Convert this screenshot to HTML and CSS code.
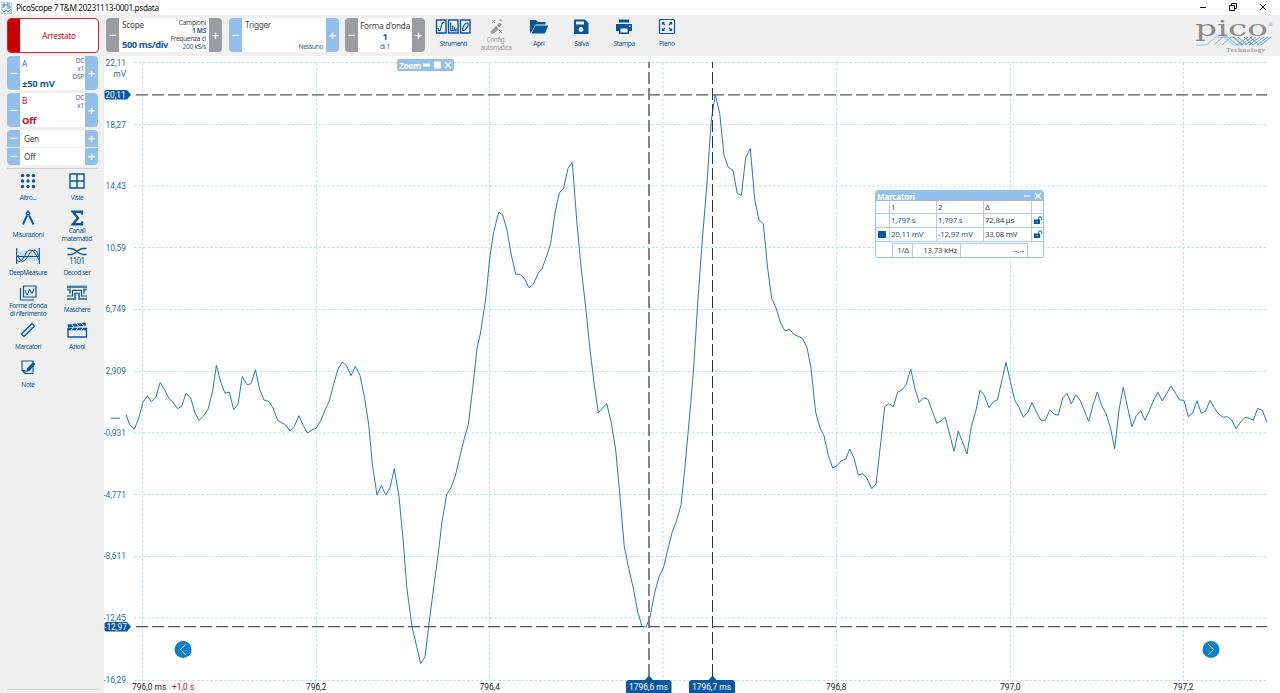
FILE: index.html
```
<!DOCTYPE html>
<html lang="it">
<head>
  <meta charset="UTF-8">
  <title>PicoScope 7 T&amp;M 20231113-0001.psdata</title>
  <link rel="stylesheet" href="styles.css">
</head>
<body>

  <header class="titlebar">
    <svg class="app-icon" viewBox="0 0 11 12"><rect x=".5" y=".5" width="10" height="11" fill="#eaf4fa" stroke="#b4d2e4"/><path d="M2 6V2h2v2H2M9 2H6v2h3v2H6M1 8l2 2 2-2 2 2 3-3" fill="none" stroke="#3d8fc0"/></svg>
    <span>PicoScope 7 T&amp;M 20231113-0001.psdata</span>
    <div class="win-buttons">
      <svg viewBox="0 0 8 8"><path d="M1 4.500h6"/></svg>
      <svg viewBox="0 0 8 8"><path d="M.5 2.500h5v5h-5zM2.500 2.500v-2h5v5h-2"/></svg>
      <svg viewBox="0 0 8 8"><path d="M1 1l6 6M7 1L1 7"/></svg>
    </div>
  </header>

  <div class="toolbar">
    <div class="status"><i></i><span>Arrestato</span></div>

    <div class="control gray scope">
      <button>−</button>
      <div class="body">
        <span class="name">Scope</span>
        <b class="value">500 ms/div</b>
        <div class="info"><span>Campioni</span><b>1 MS</b><span>Frequenza ci</span><em>200 kS/s</em></div>
      </div>
      <button>+</button>
    </div>

    <div class="control trigger">
      <button>−</button>
      <div class="body"><span class="name">Trigger</span><em class="state">Nessuno</em></div>
      <button>+</button>
    </div>

    <div class="control gray wave">
      <button>−</button>
      <div class="body"><span class="name">Forma d'onda</span><b>1</b><em>di 1</em></div>
      <button>+</button>
    </div>

    <nav class="actions">
      <a class="action">
        <svg width="36" height="18" viewBox="0 0 36 18" fill="none" stroke="#075798" stroke-width="1.200"><path d="M1.500 2h9.500v13H1.500zM13.500 2h9.500v13h-9.500zM25.500 2H35v13h-9.500z" stroke-width="1.400"/><path d="M3 10c1 5 2.300 3 3.200-1.500S8.500 4 9.500 4.500M15.700 4.500v8.200h6M17.700 12V7.500M19.700 12v-3M21.300 12v-1.500"/><path d="M27.500 12.500c-.8-2.500 3-8 5-7.500s-.5 6.500-3.500 7.300z"/></svg>
        <span>Strumenti</span>
      </a>
      <a class="action off">
        <svg width="18" height="18" viewBox="0 0 18 18"><path d="M3 14l6-6 3 3-6 5zM10 7l2.500-2.500 2.500 2-2.500 3z" fill="#999"/><path d="M5 2l3 3M8 2L5 5M12.500 1l2 2M14.500 1l-2 2M12 12l3 3M15 12l-3 3" stroke="#999"/></svg>
        <span>Config.<br>automatica</span>
      </a>
      <a class="action">
        <svg width="20" height="18" viewBox="0 0 20 18"><path d="M1 15V2h6l2 2h7.500v2.500H6.500L3 13z" fill="#075798"/><path d="M6.300 7.500h12.900L16 15.500H2.500z" fill="#075798"/></svg>
        <span>Apri</span>
      </a>
      <a class="action">
        <svg width="16" height="18" viewBox="0 0 16 18"><path d="M1 1.500h11l3.500 3.500v11H1z" fill="#075798"/><path d="M3 3.500h8v3H3z" fill="#efefef"/><circle cx="8" cy="11.500" r="2.400" fill="#efefef"/></svg>
        <span>Salva</span>
      </a>
      <a class="action">
        <svg width="18" height="18" viewBox="0 0 18 18"><path d="M4 1.500h10v3H4zM1 6h16v7h-3v3H4v-3H1z" fill="#075798"/><path d="M5.500 10.500h7v4h-7z" fill="#efefef"/><path d="M14 7.500h1.500V9H14z" fill="#fff"/></svg>
        <span>Stampa</span>
      </a>
      <a class="action">
        <svg width="18" height="18" viewBox="0 0 18 18" fill="none" stroke="#075798"><rect x="1.500" y="1.500" width="15" height="14" rx="1" stroke-width="1.200"/><path stroke-width="1.200" d="M4.500 6.500v-2h2M4.500 4.500L7 7M11.500 4.500h2v2M13.500 4.500L11 7M4.500 10.500v2h2M4.500 12.500L7 10M11.500 12.500h2v-2M13.500 12.500L11 10"/></svg>
        <span>Pieno</span>
      </a>
    </nav>

    <svg class="logo" viewBox="0 0 80 38">
      <text class="logo-name" x="2" y="18" textLength="73" lengthAdjust="spacingAndGlyphs">pico</text>
      <text class="logo-reg" x="75" y="8">®</text>
      <g fill="none">
        <path d="M3 27h10l10-8h8l10 8h8" stroke="#a9d3f1" stroke-width="1.500"/>
        <path d="M21 27l9-8h5l9 8M29 27l9-8h3l9 8" stroke="#72b2e1"/>
        <path d="M44 27l11-8M48 27l11-8M52 27l11-8M56 27l11-8M60 27l11-8M64 27l11-8M68 27l10-8M40 19l9 8M45 19l9 8M51 19l9 8M57 19l9 8" stroke="#4d93c9" stroke-width=".8"/>
      </g>
      <text class="logo-sub" x="33" y="34" textLength="39">Technology</text>
    </svg>
  </div>

  <div class="main">
    <aside class="sidebar">
      <div class="control channel">
        <button>−</button>
        <div class="body"><span class="name">A</span><b class="value">±50 mV</b><div class="info">DC<br>x1<br>DSP</div></div>
        <button>+</button>
      </div>
      <div class="control channel red">
        <button>−</button>
        <div class="body"><span class="name">B</span><b class="value">Off</b><div class="info">DC<br>x1</div></div>
        <button>+</button>
      </div>
      <div class="generator">
        <div class="control"><button>−</button><span class="body">Gen</span><button>+</button></div>
        <div class="control"><button>−</button><span class="body">Off</span><button>+</button></div>
      </div>

      <div class="tools">
        <a class="tool">
          <svg viewBox="0 0 24 18" class="dots"><circle cx="6.500" cy="3.500" r="1.700"/><circle cx="12" cy="3.500" r="1.700"/><circle cx="17.500" cy="3.500" r="1.700"/><circle cx="6.500" cy="9" r="1.700"/><circle cx="12" cy="9" r="1.700"/><circle cx="17.500" cy="9" r="1.700"/><circle cx="6.500" cy="14.500" r="1.700"/><circle cx="12" cy="14.500" r="1.700"/><circle cx="17.500" cy="14.500" r="1.700"/></svg>
          <span>Altro...</span>
        </a>
        <a class="tool">
          <svg viewBox="0 0 24 18"><path d="M5 2h14v14H5zM12 2v14M5 9h14"/></svg>
          <span>Viste</span>
        </a>
        <a class="tool">
          <svg viewBox="0 0 24 18"><circle cx="12" cy="4.500" r="1.700" stroke-width="1.200"/><path d="M11 6.500L7 15.500M13 6.500l4.500 9" stroke-width="1.900"/><path d="M12 1v2" stroke-width="1.200"/></svg>
          <span>Misurazioni</span>
        </a>
        <a class="tool">
          <svg viewBox="0 0 24 18"><path d="M17 5.500V2.800H7.800L13 9l-5.200 6.200H17v-2.700" stroke-width="2.400"/></svg>
          <span>Canali<br>matematici</span>
        </a>
        <a class="tool">
          <svg viewBox="0 0 24 18"><path d="M2 4h20v10H2z" fill="#cddbe6" stroke="none"/><path d="M.7 1v16M23.300 1v16M1 9.500h22" stroke-width="1.200"/><path d="M1 14c3 1 5 0 7-4s3.500-7 6-7 5 2 9 10M2 8c2 7 5 8 8 4s5-9 8-9 3 3 4.500 6" stroke-width="1"/></svg>
          <span>DeepMeasure</span>
        </a>
        <a class="tool">
          <svg viewBox="0 0 24 18"><path d="M2.500 1.500h3.500c5 0 7 6 12 6h3.500M2.500 7.500h3.500c5 0 7-6 12-6h3.500" stroke-width="1.600"/><text x="4" y="16.500" textLength="16">1101</text></svg>
          <span>Decod ser</span>
        </a>
        <a class="tool">
          <svg viewBox="0 0 24 18"><path d="M7.500 2H20v11H7.500zM4.500 4v12H18" stroke-width="1.200"/><path d="M9 6c1 5 2.500 6 3.500 2s1.500-2.500 2.200-.5 2 3 3.300-3" stroke-width="1.100"/></svg>
          <span>Forme d'onda<br>di riferimento</span>
        </a>
        <a class="tool">
          <svg viewBox="0 0 24 18"><path d="M2 2.800h20" stroke-width="2.400" stroke="#4680ad"/><path d="M2 5.500h3v4M22 5.500h-3v4" stroke-width="2" stroke="#4680ad"/><path d="M2 12h5.500V6.300h9V12H22" stroke-width="1.200"/><path d="M2 15h8V9.500h4V15h8" stroke-width="2" stroke="#4680ad"/></svg>
          <span>Maschere</span>
        </a>
        <a class="tool">
          <svg viewBox="0 0 24 18"><path d="M5.500 13L16 2.500l2.500 2.500L8 15.500z" stroke-width="1.300"/><path d="M8 11.500l1 1M10 9.500l1 1M12 7.500l1 1M14 5.500l1 1" stroke-width=".8"/></svg>
          <span>Marcatori</span>
        </a>
        <a class="tool">
          <svg viewBox="0 0 24 18"><path d="M3 8h18.500v8H3z" stroke-width="1.300"/><path d="M2.500 3.500l18-2 .5 3-18 2z" fill="#075798" stroke="none"/><path d="M2.500 8h19.500" stroke-width="2.600"/><path d="M6 2.500l2.500 3M11 2l2.500 3M16 1.500l2.500 3M8 6.500l-2 3M13 6.500l-2 3M18 6.500l-2 3" stroke="#efefef" stroke-width="1"/></svg>
          <span>Azioni</span>
        </a>
        <a class="tool">
          <svg viewBox="0 0 24 18"><path d="M6 3h11v12.500H9L6 12.500zM6 12.500h3v3" stroke-width="1.100"/><path d="M10 14l1-3.500 6-6.500 2.500 2-6 7z" fill="#075798" stroke="none"/></svg>
          <span>Note</span>
        </a>
      </div>
    </aside>

    <section class="view">
      <!-- plot coordinates are window pixels, shifted by the viewBox -->
      <svg class="plot" viewBox="104 56 1176 637">
        <path class="grid" d="M134 62.500H1267M134 124.500H1267M134 186H1267M134 247.500H1267M134 309.500H1267M134 371.500H1267M134 432.800H1267M134 494.500H1267M134 556.500H1267M134 618H1267M134 680.500H1267"/>
        <path class="grid" d="M142.500 63V681M316.500 63V681M489.500 63V681M663 63V681M836.500 63V681M1010.500 63V681M1183.500 63V681"/>

        <polyline class="trace" points="126,414.300 129.700,424.700 134.300,429.300 138.700,418.300 143,402.300 147.300,395.700 151.300,401.700 155.700,397.700 160.200,382.500 164.300,389.300 168.700,398 172.700,402 177.700,408.700 181.700,406 186,393.300 190.700,398 195,413 199,420.300 203.300,416.300 208,409.300 212.500,391.700 216.400,365.300 220.700,382 225,393.300 229.300,392 233.700,409.700 238,404.300 242.300,376.300 247,384.700 251,383.700 255.400,369.700 259.700,389.300 264,400 268.700,401.300 273,408 277.700,420.300 285.700,425 290,431 294.300,426.300 299,415.700 303.300,425.700 307.600,433 312.300,429.700 316.300,428 320.700,420.700 325.300,409.300 329.300,401 333.700,384 338,369 342.300,362 346.700,366 351,375.700 355.300,366.300 360,375.300 364.700,398.700 368.700,424.700 372.300,464 377,495 381.300,485.700 385.700,494.700 390,488 394.300,468.700 399,496.700 403.300,541.700 406.700,586.700 412,626.700 416.700,646.700 420.700,663.700 425,656.700 429,623.300 434.300,582.700 438.300,553.300 442,521.700 446.700,494.300 451,487.700 455.300,476 459.700,457.300 464.300,438.300 468.300,424.700 472.700,388.300 477,348.300 480.500,333 486,296.700 489.700,258.300 493.700,231.700 498.700,212.300 502.700,215 507,230 511.300,255 515.700,274.300 520.300,274.300 524.700,279 529,287.700 533.300,284.300 538,273.700 542,268.700 546.300,257.300 550.700,243.300 555,212.700 559.300,193 563.700,188 568,168.300 572.300,162.300 576.700,220 581,266.700 586,310 589.700,346.700 593.700,380 598.300,412.700 606.700,403.300 611.300,422.700 615.700,450 620,496.700 624.300,546.700 628.700,568.300 633.300,588.300 637.700,611.700 642,626.300 646,627 650,617.300 654.700,592.700 659,576.700 663.300,568.300 667.700,550 672,532.700 676.700,520.300 681,505 685,466.700 690.700,403.300 693.600,369 697.700,303.300 702.300,240 706.700,186.700 711.300,120 715.300,94.700 719.700,113.300 724,155 728.300,167.300 733,170.300 737.300,193.700 741.300,195.300 745.700,157.700 750.300,148.300 754.700,199.300 759,220 763.300,223.700 767.700,268.300 771.700,298.300 776,308 780.700,323.300 785,331 789.300,329 793.700,334 798,336.300 802.300,338.300 807,347.300 811,368.300 815.700,412.300 819.700,427.300 824,435.700 828.300,455.300 832.700,468 837,465.700 841.300,460.700 845.700,459.300 849.700,449 854,458.300 858.300,475 863,473.700 867,478.300 871.700,488.700 876,484 880.300,446.700 884.700,406.700 889,403.700 893.300,406.700 897.700,392 902,390 906,384.700 910.700,369 915,389 919.300,402.300 923.700,397.700 928,399.300 936.700,423.300 941,421 945.300,417.300 954,451.300 958.300,431 967,454 971.300,426.700 975.700,411.700 980,390.300 984.300,395.300 989,407.700 993.300,401.700 997.300,400 1001.700,381.300 1006,362.300 1010.300,381.300 1014.700,400 1019,407.300 1023.300,417.300 1027.700,412.300 1032,402.700 1036.700,412.700 1041,420.300 1045.300,420.300 1049.700,410 1054,414 1058.300,415.300 1062.700,398 1067,393.300 1071.300,404 1075.700,394.700 1080,400 1088.700,421.300 1093,405 1097.300,392 1101.700,405.700 1106,413.700 1110.300,427.300 1114.700,448.700 1119,410 1123.300,387 1127.700,408.300 1132,426.700 1136.300,415.700 1140.700,410.700 1145,420.300 1149.300,410.700 1153.700,400 1158,392.300 1162.300,401 1171,386 1179.700,400 1184,400.300 1188.300,416.700 1192.700,413 1197,400.700 1201.300,413.300 1205.700,411 1210,400.300 1214.300,407.700 1218.700,414 1223.300,417.300 1227.300,416.700 1231.700,420 1236,428.700 1240.700,422 1245,417.300 1249.300,418.300 1253.300,420.300 1257.700,408.300 1262.300,410.300 1267,422.300"/>
        <path d="M110.500 418.200H120" class="trace"/>

        <path class="marker" d="M136 94.800H1267M136 626.600H1267"/>
        <path class="marker wide" d="M649 62V678" stroke-dashoffset="6"/>
        <path class="marker dark" d="M712.500 62V678" stroke-dashoffset="6"/>

        <g class="axis-y">
          <text x="126" y="65.500">22,11</text>
          <text x="126" y="77">mV</text>
          <text x="126" y="127.500">18,27</text>
          <text x="126" y="189">14,43</text>
          <text x="126" y="250.500">10,59</text>
          <text x="126" y="312.300">6,749</text>
          <text x="126" y="374">2,909</text>
          <text x="126" y="436">-0,931</text>
          <text x="126" y="497.500">-4,771</text>
          <text x="126" y="559.300">-8,611</text>
          <text x="126" y="620.800">-12,45</text>
          <text x="126" y="682.800">-16,29</text>
        </g>
        <g class="axis-x">
          <text x="132" y="690">796,0 ms</text>
          <text x="172" y="690" class="offset">+1,0 s</text>
          <text x="306" y="690">796,2</text>
          <text x="479.500" y="690">796,4</text>
          <text x="826" y="690">796,8</text>
          <text x="1000" y="690">797,0</text>
          <text x="1173" y="690">797,2</text>
        </g>

        <g class="flag">
          <path d="M106 90h21l4 4.800-4 4.800h-21l-1.500-1.500v-6.600z"/>
          <text x="115.500" y="98">20,11</text>
          <path d="M106 622h21l4 4.700-4 4.700h-21l-1.500-1.500v-6.400z"/>
          <text x="115.500" y="629.800">-12,97</text>
          <path d="M628 680h17l4-4.500 4 4.500h16.500l2 2v11H626v-11z"/>
          <text x="648.500" y="690">1796,6 ms</text>
          <path d="M691 680h17.500l4-4.500 4 4.500H733l2 2v11h-46v-11z"/>
          <text x="711.500" y="690">1796,7 ms</text>
        </g>

        <g class="pager">
          <circle cx="183" cy="649.500" r="8.500"/><path d="M185.500 644.500l-5 5 5 5"/>
          <circle cx="1211" cy="649.500" r="8.500"/><path d="M1208.500 644.500l5 5-5 5"/>
        </g>
      </svg>

      <div class="zoom-box">
        <span>Zoom</span>
        <svg viewBox="0 0 30 10"><path d="M1 3.500h7v3H1zM12 1.500h7v7h-7z" fill="#fff"/><path d="M23 2l6 6M29 2l-6 6" stroke="#fff" stroke-width="1.300"/></svg>
      </div>

      <div class="markers">
        <div class="markers-head">
          <b>Marcatori</b>
          <svg width="18" height="10" viewBox="0 0 18 10"><path d="M0 5h6M11 2l6 6M17 2l-6 6" stroke="#fff" stroke-width="1.200"/></svg>
        </div>
        <div class="markers-grid">
          <span></span><span>1</span><span>2</span><span>Δ</span><span></span>
          <span></span><span class="num">1,797 s</span><span class="num">1,797 s</span><span>72,84 µs</span>
          <span class="lock"><svg width="9" height="9" viewBox="0 0 9 9"><path d="M0 3.500h6v4.500H0z" fill="#075798"/><path d="M4.500 4V2.500a1.600 1.600 0 0 1 3.200 0V4" fill="none" stroke="#075798"/><path d="M2.500 5.300h1v1h-1z" fill="#fff"/></svg></span>
          <span class="swatch"><i></i></span><span class="num">20,11 mV</span><span class="num">-12,97 mV</span><span>33,08 mV</span>
          <span class="lock"><svg width="9" height="9" viewBox="0 0 9 9"><path d="M0 3.500h6v4.500H0z" fill="#075798"/><path d="M4.500 4V2.500a1.600 1.600 0 0 1 3.200 0V4" fill="none" stroke="#075798"/><path d="M2.500 5.300h1v1h-1z" fill="#fff"/></svg></span>
        </div>
        <div class="markers-foot"><span>1/Δ</span><span>13,73 kHz</span><span>--.--</span></div>
      </div>
    </section>
  </div>

</body>
</html>
```
FILE: styles.css
```
:root {
  --blue: #075798;
  --light: #93bfeb;
  --gray: #9b9ca0;
  --bar: #efefef;
  --red: #e2002b;
}

* {
  box-sizing: border-box;
}

body {
  margin: 0;
  width: 1280px;
  height: 693px;
  overflow: hidden;
  background: var(--bar);
  color: #444;
  font-family: "Noto Sans", "Open Sans", sans-serif;
  font-size: 8.2px;
  letter-spacing: -.25px;
  display: flex;
  flex-direction: column;
}

em, i {
  font-style: normal;
}

.titlebar {
  height: 15px;
  flex: none;
  background: #fff;
  color: #111;
  display: flex;
  align-items: center;
  gap: 4px;
  padding-left: 1px;
  font-size: 8.3px;
  letter-spacing: -.4px;
}

.app-icon {
  width: 11px;
  height: 12px;
}

.win-buttons {
  margin-left: auto;
  display: flex;
  gap: 22px;
  padding-right: 13px;
  margin-top: -2px;
}

.win-buttons svg {
  width: 8px;
  height: 8px;
  fill: none;
  stroke: #111;
}

.toolbar {
  height: 41px;
  flex: none;
  display: flex;
  padding: 3px 7px 4px;
}

.status {
  width: 92px;
  height: 35px;
  border: 1px solid #d92231;
  border-radius: 4px;
  background: #fff;
  color: #d00;
  display: flex;
  overflow: hidden;
  margin-right: 7px;
}

.status i {
  width: 12px;
  background: #c60000;
}

.status span {
  margin: auto;
}

/* minus / body / plus blocks */
.control {
  display: flex;
  height: 34px;
  background: #fff;
  border-radius: 4px;
  overflow: hidden;
}

.control button {
  width: 13px;
  flex: none;
  border: 0;
  padding: 0;
  background: var(--light);
  color: #fff;
  font: 600 13px/1 "Open Sans", sans-serif;
}

.gray button {
  background: var(--gray);
}

.control .body {
  flex: 1;
  min-width: 0;
  position: relative;
  display: flex;
  flex-direction: column;
  justify-content: space-between;
  padding: 1px 3px;
  white-space: nowrap;
}

.name {
  line-height: 11px;
}

.value {
  color: #17599b;
  font-size: 9.5px;
  line-height: 13px;
}

.info {
  position: absolute;
  right: 2px;
  top: 1px;
  display: flex;
  flex-direction: column;
  text-align: right;
  font-size: 6.5px;
  line-height: 8px;
}

.info b, .info em, .body em {
  color: #285f94;
}

.scope {
  width: 116px;
  margin-right: 7px;
}

.scope .value {
  font-size: 9.3px;
  letter-spacing: -.4px;
}

.scope .info {
  right: 3px;
}

.trigger {
  width: 110px;
  margin-right: 6px;
}

.trigger .state {
  align-self: flex-end;
  font-size: 6.6px;
  letter-spacing: -.4px;
}

.wave {
  width: 80px;
}

.wave .body {
  align-items: center;
  padding: 2px 0;
}

.wave b {
  color: #17599b;
  font-size: 9.3px;
  line-height: 11px;
}

.wave em {
  font-size: 6.6px;
  line-height: 9px;
}

.actions {
  display: flex;
  padding-left: 7px;
}

.action {
  width: 42.7px;
  display: flex;
  flex-direction: column;
  align-items: center;
  color: var(--blue);
  font-size: 6.5px;
  line-height: 8px;
  letter-spacing: -.35px;
  text-align: center;
}

.action span {
  padding-top: 4px;
}

.action svg {
  flex: none;
}

.action.off {
  color: #999;
}

.off span {
  padding-top: 0;
}

.logo {
  width: 80px;
  height: 38px;
  margin-left: auto;
  overflow: visible;
  letter-spacing: 0;
}

.logo text {
  fill: #8b8b8b;
  font-family: "DejaVu Serif", serif;
}

.logo .logo-name {
  font-size: 23px;
}

.logo .logo-reg {
  font-size: 5px;
}

.logo .logo-sub {
  font: 700 7px "Liberation Serif", serif;
  fill: #a0a0a0;
}

.main {
  flex: 1;
  display: flex;
  min-height: 0;
}

.sidebar {
  width: 104px;
  flex: none;
  padding: 0 6px 3px 7px;
  display: flex;
  flex-direction: column;
  gap: 3px;
}

.sidebar .control {
  width: 91px;
  flex: none;
}

.channel .body {
  padding: 2px 1px 0 2px;
}

.channel .name,
.channel .info {
  color: #3d6e9b;
}

.channel .info {
  right: 1px;
}

.channel.red .name,
.channel.red .value {
  color: var(--red);
}

.generator {
  display: flex;
  flex-direction: column;
  border-radius: 4px;
  overflow: hidden;
  gap: 1px;
  flex: none;
}

.generator .control {
  height: 17px;
  border-radius: 0;
}

.generator .body {
  padding-left: 4px;
  justify-content: center;
}

.tools {
  flex: 1;
  display: grid;
  grid-template-columns: 49px 49px;
  grid-auto-rows: 37.3px;
  border-top: 1px solid #cfcfcf;
  border-bottom: 1px solid #cfcfcf;
  padding-top: 3px;
}

.tool {
  display: flex;
  flex-direction: column;
  align-items: center;
  color: var(--blue);
  font-size: 6.5px;
  line-height: 8px;
  letter-spacing: -.4px;
  text-align: center;
  white-space: nowrap;
  margin: 0 3.5px 0 -3.5px;
}

.tool svg {
  width: 24px;
  height: 18px;
  flex: none;
  fill: none;
  stroke: var(--blue);
  stroke-width: 1.4;
}

.tool .dots {
  fill: var(--blue);
  stroke: none;
}

.tool svg text {
  fill: var(--blue);
  stroke: none;
  font-size: 8px;
  letter-spacing: 0;
}

.tool span {
  margin: auto 0;
  padding-bottom: 3px;
}

.view {
  flex: 1;
  position: relative;
  background: #fff;
}

.plot {
  display: block;
  width: 1176px;
  height: 637px;
  font-family: Roboto, sans-serif;
  font-size: 8.4px;
  letter-spacing: 0;
}

.grid {
  stroke: #b8e1e9;
  stroke-dasharray: 2.5 2;
  fill: none;
}

.trace {
  fill: none;
  stroke: #2478bd;
  stroke-width: 1;
}

.marker {
  stroke: #555;
  stroke-width: 1.2;
  stroke-dasharray: 12 4;
}

.marker.wide {
  stroke: #777;
  stroke-width: 1.8;
}

.marker.dark {
  stroke: #333;
  stroke-width: 1;
}

.axis-y text {
  fill: #1f6dae;
  text-anchor: end;
}

.axis-x text {
  fill: #222;
}

.axis-x .offset {
  fill: #d9001b;
}

.flag path {
  fill: #0758a0;
}

.flag text {
  fill: #fff;
  text-anchor: middle;
}

.pager circle {
  fill: #0681ce;
}

.pager path {
  fill: none;
  stroke: #fff;
}

.zoom-box {
  position: absolute;
  left: 293px;
  top: 3px;
  width: 57px;
  height: 12px;
  padding: 0 2px;
  border-radius: 2px;
  background: var(--light);
  color: #fff;
  font-weight: 700;
  display: flex;
  align-items: center;
  justify-content: space-between;
}

.zoom-box svg {
  width: 30px;
  height: 10px;
}

.markers {
  position: absolute;
  left: 771px;
  top: 134px;
  width: 169px;
  height: 68px;
  background: #fff;
  border: 1px solid var(--light);
  border-radius: 3px;
  overflow: hidden;
  font-size: 7.9px;
  letter-spacing: -.25px;
}

.markers-head {
  height: 10px;
  background: var(--light);
  color: #fff;
  display: flex;
  align-items: center;
  justify-content: space-between;
  padding: 0 1px;
  font-size: 8.2px;
}

.markers-grid {
  display: grid;
  grid-template-columns: 14px 47px 47px 48px 11px;
  grid-template-rows: 13px 14px 14px;
}

.markers-grid span {
  border-right: 1px solid #a9cdef;
  border-bottom: 1px solid #a9cdef;
  padding-left: 1px;
  line-height: 13px;
  white-space: nowrap;
}

.markers-grid .num {
  color: #17599b;
}

.markers-grid span:nth-child(5n) {
  border-right: 0;
}

.markers-grid .lock {
  display: flex;
  align-items: center;
  padding-left: 2px;
}

.markers-grid .swatch {
  padding: 3px 2px;
}

.swatch i {
  display: block;
  width: 8px;
  height: 7px;
  background: #0758a0;
}

.markers-foot {
  display: grid;
  grid-template-columns: 20px 48px 67px;
  margin: 1px 0 0 16px;
  border-left: 1px solid #a9cdef;
  border-top: 1px solid #a9cdef;
  width: 136px;
}

.markers-foot span {
  border-right: 1px solid #a9cdef;
  line-height: 13px;
  padding-right: 3px;
  text-align: right;
}
```
